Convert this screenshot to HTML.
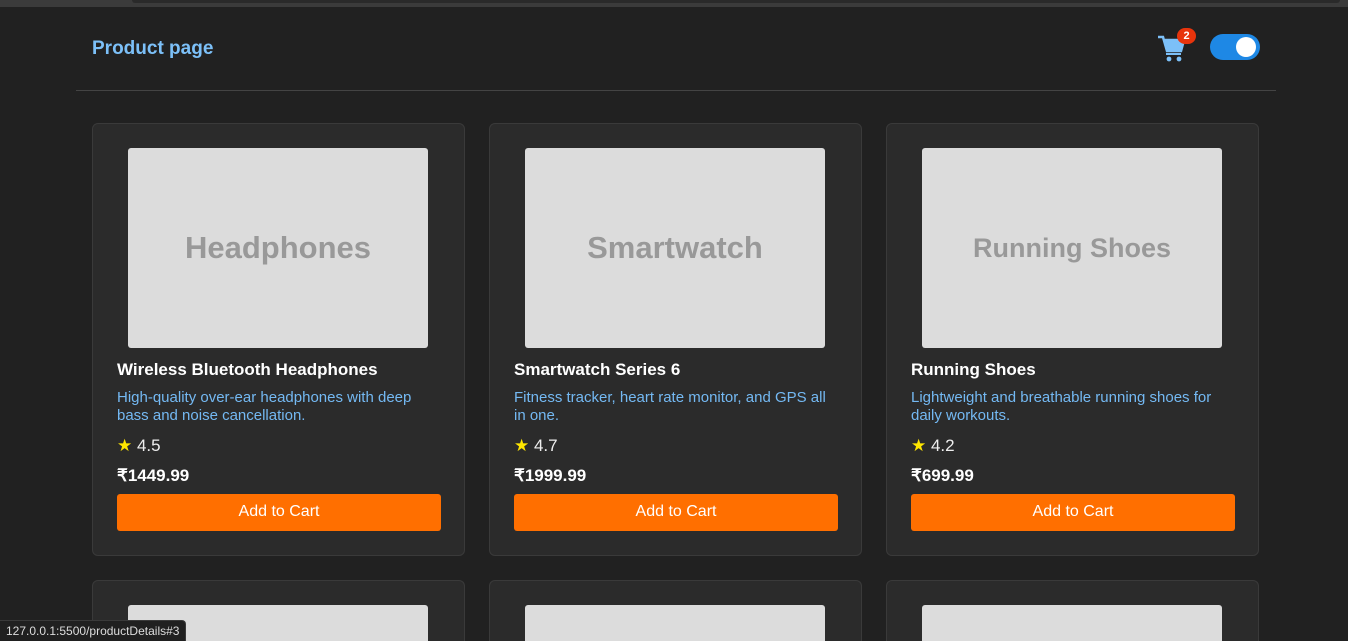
<!DOCTYPE html>
<html><head><meta charset="utf-8"><style>
*{box-sizing:border-box;margin:0;padding:0}
html,body{width:1348px;height:641px;overflow:hidden}
body{background:#212121;font-family:"Liberation Sans",Arial,sans-serif;position:relative}
.topbar{position:absolute;left:0;top:0;width:1348px;height:7px;background:#3b3b3b}
.topbar i{position:absolute;left:132px;right:8px;top:0;height:3px;background:#2a2a2a;border-radius:0 0 4px 4px}
.title{position:absolute;left:92px;top:38px;font-size:19px;font-weight:bold;color:#7cc0f8}
.hr{position:absolute;left:76px;width:1200px;top:90px;height:1px;background:#444}
.cart{position:absolute;left:1157px;top:34px}
.badge{position:absolute;left:1177px;top:28px;width:19px;height:16px;border-radius:9px;background:#e8340c;color:#fff;font-size:11px;font-weight:bold;text-align:center;line-height:16px}
.toggle{position:absolute;left:1210px;top:34px;width:50px;height:26px;border-radius:13px;background:#1e88e5}
.toggle i{position:absolute;right:4px;top:3px;width:20px;height:20px;border-radius:50%;background:#fff}
.card{position:absolute;width:373px;height:433px;background:#2b2b2b;border:1px solid #3a3a3a;border-radius:6px;overflow:hidden}
.card.s{height:61px;border-bottom:none;border-radius:6px 6px 0 0}
.img{position:absolute;left:35px;top:24px;width:300px;height:200px;background:#dcdcdc;border-radius:3px;color:#999;font-size:31px;font-weight:bold;display:flex;align-items:center;justify-content:center}
.h{position:absolute;left:24px;top:236px;font-size:17px;font-weight:bold;color:#fff}
.d{position:absolute;left:24px;top:265px;width:312px;font-size:15px;line-height:18px;color:#74b9f3}
.r{position:absolute;left:24px;top:312px;font-size:17px;color:#eee}
.r b{color:#ffe600;font-weight:normal}
.p{position:absolute;left:24px;top:342px;font-size:17px;font-weight:bold;color:#fff}
.btn{position:absolute;left:24px;top:370px;width:324px;height:37px;background:#ff6f00;border-radius:3px;color:#fff;font-size:16px;text-align:center;line-height:35px}
.status{position:absolute;left:0;bottom:0;height:21px;padding:0 6px;background:#202020;border:1px solid #3a3a3a;border-left:none;border-bottom:none;border-radius:0 4px 0 0;color:#ddd;font-size:12px;line-height:21px}
</style></head><body>
<div class="topbar"><i></i></div>
<div class="title">Product page</div>
<div class="hr"></div>
<svg class="cart" width="30" height="28" viewBox="0 0 30 28"><path d="M1 3h5l4 14h14l3-11H8" fill="none" stroke="#7cc0f8" stroke-width="2.5"/><path d="M7 5h21l-3 12H10z" fill="#7cc0f8"/><rect x="9" y="19" width="15" height="2" fill="#7cc0f8"/><circle cx="12" cy="25" r="2.4" fill="#7cc0f8"/><circle cx="22" cy="25" r="2.4" fill="#7cc0f8"/></svg>
<div class="badge">2</div>
<div class="toggle"><i></i></div>

<div class="card" style="left:92px;top:123px"><div class="img">Headphones</div><div class="h">Wireless Bluetooth Headphones</div><div class="d">High-quality over-ear headphones with deep bass and noise cancellation.</div><div class="r"><b>★</b> 4.5</div><div class="p">₹1449.99</div><div class="btn">Add to Cart</div></div>
<div class="card" style="left:489px;top:123px"><div class="img">Smartwatch</div><div class="h">Smartwatch Series 6</div><div class="d">Fitness tracker, heart rate monitor, and GPS all in one.</div><div class="r"><b>★</b> 4.7</div><div class="p">₹1999.99</div><div class="btn">Add to Cart</div></div>
<div class="card" style="left:886px;top:123px"><div class="img" style="font-size:27px">Running Shoes</div><div class="h">Running Shoes</div><div class="d">Lightweight and breathable running shoes for daily workouts.</div><div class="r"><b>★</b> 4.2</div><div class="p">₹699.99</div><div class="btn">Add to Cart</div></div>

<div class="card s" style="left:92px;top:580px"><div class="img"></div></div>
<div class="card s" style="left:489px;top:580px"><div class="img"></div></div>
<div class="card s" style="left:886px;top:580px"><div class="img"></div></div>
<div class="status">127.0.0.1:5500/productDetails#3</div>
</body></html>
